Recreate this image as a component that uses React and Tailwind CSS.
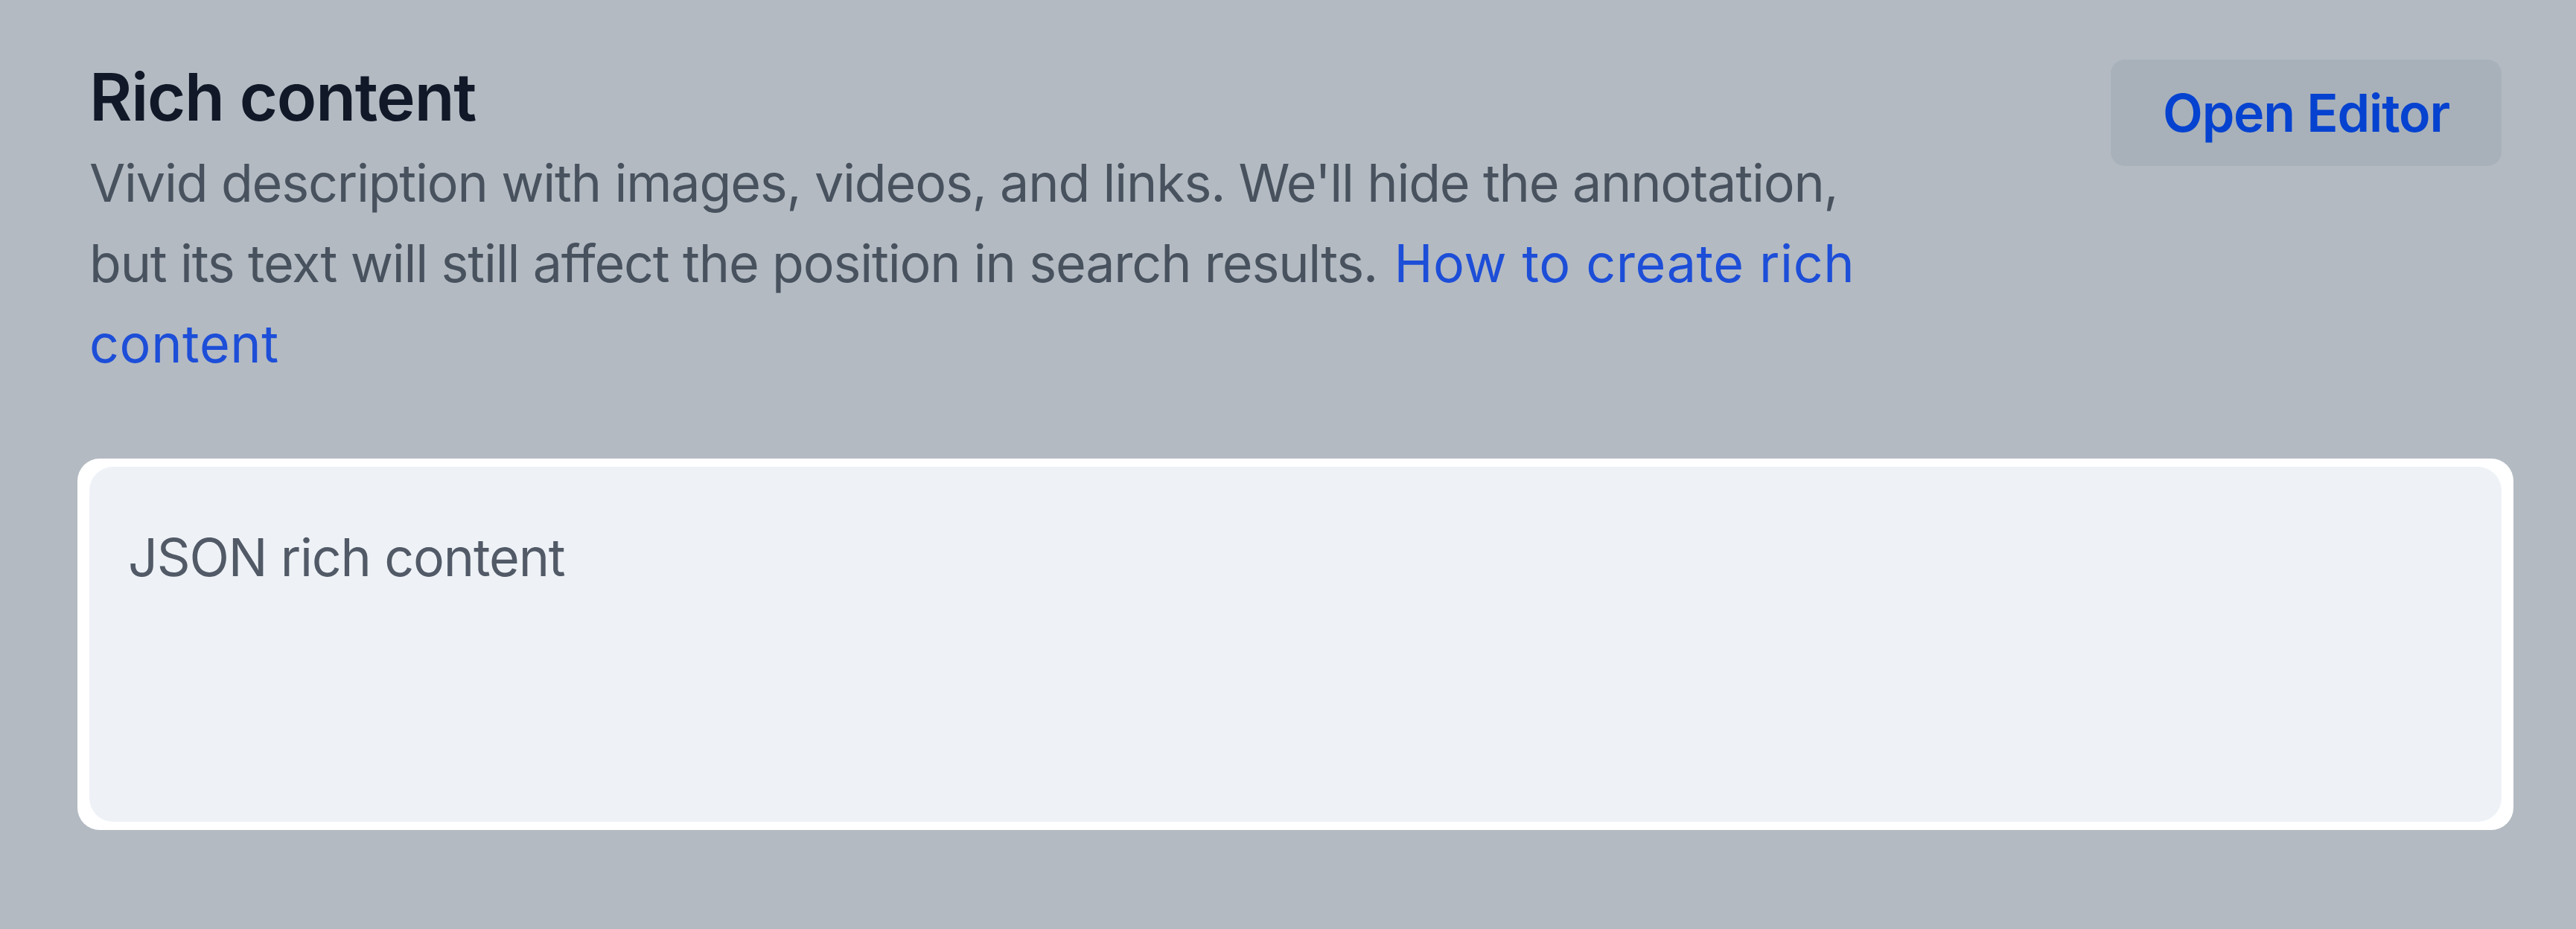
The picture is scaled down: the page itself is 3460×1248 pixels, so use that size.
export default function App() {
  return (
    <div
      className="min-h-screen bg-[#b3bac2] pl-[120px] pr-[100px] pt-[69px] tracking-[-1.2px]"
      style={{ fontFamily: "Inter, 'Noto Sans', sans-serif" }}
    >
      <div className="flex items-start justify-between">
        <div className="max-w-[2440px]">
          <h2 className="text-[88px] leading-[123px] font-semibold text-[#111827]">Rich content</h2>
          <p className="text-[70px] leading-[108px] text-[#48525e]">
            Vivid description with images, videos, and links. We'll hide the annotation, but its text will
            still affect the position in search results.{" "}
            <a href="#" className="ml-[4px] tracking-[0.6px] text-[#1d4ed8]">
              How to create rich content
            </a>
          </p>
        </div>
        <button className="mt-[11px] h-[143px] shrink-0 rounded-[19px] bg-[#a8b1ba] px-[70px] text-[70px] font-semibold text-[#0642d0]">
          Open Editor
        </button>
      </div>

      <div className="-mx-[16px] mt-[100px] rounded-[30px] bg-white px-[16px] py-[11px]">
        <div className="h-[477px] rounded-[32px] bg-[#eef2f7] px-[52px] pt-[68px] text-[70px] leading-[108px] text-[#515a66]">
          JSON rich content
        </div>
      </div>
    </div>
  );
}
